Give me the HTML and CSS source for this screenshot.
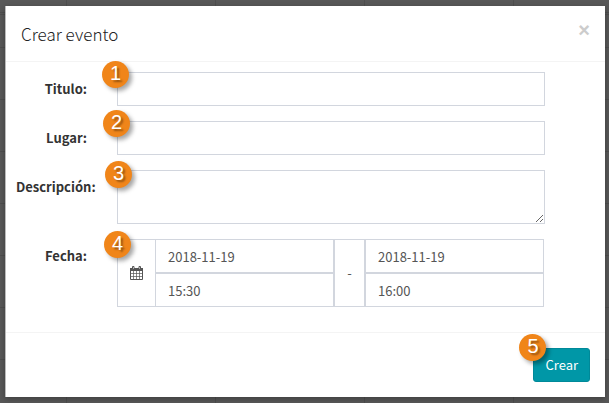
FILE: index.html
```html
<!DOCTYPE html>
<html lang="es">
<head>
    <meta charset="UTF-8">
    <meta name="viewport" content="width=device-width, initial-scale=1.0">
    <title>Crear evento</title>
    <link rel="stylesheet" href="styles.css">
</head>
<body>
    <form class="modal">
        <div class="modal-header">
            <h4 class="modal-title">Crear evento</h4>
            <button type="button" class="close" aria-label="Cerrar">&times;</button>
        </div>

        <div class="modal-body">
            <div class="form-group">
                <label for="titulo">Titulo:</label>
                <div class="field">
                    <input type="text" id="titulo" class="form-control">
                    <span class="step step-1">1</span>
                </div>
            </div>
            <div class="form-group">
                <label for="lugar">Lugar:</label>
                <div class="field">
                    <input type="text" id="lugar" class="form-control">
                    <span class="step step-2">2</span>
                </div>
            </div>
            <div class="form-group">
                <label for="descripcion">Descripción:</label>
                <div class="field">
                    <textarea id="descripcion" class="form-control"></textarea>
                    <span class="step step-3">3</span>
                </div>
            </div>
            <div class="form-group">
                <label for="fecha">Fecha:</label>
                <div class="field">
                    <div class="date-range">
                        <span class="addon">
                            <svg class="calendar" width="13" height="14" viewBox="0 0 13 14" fill="none" stroke="currentColor">
                                <path d="M.5 3.5v10h12v-10"/>
                                <path d="M3.5 5v8M6.5 5v8M9.5 5v8M1 7.5h11M1 10.5h11" stroke-opacity=".7"/>
                                <path d="M0 2h13v3H0z" fill="currentColor" stroke="none"/>
                                <path d="M2.5 3.5v-3h1.5v3zM9 3.5v-3h1.5v3z" fill="#fff"/>
                            </svg>
                        </span>
                        <div class="date-time">
                            <input type="text" id="fecha" class="form-control" value="2018-11-19">
                            <input type="text" class="form-control" value="15:30" aria-label="Hora de inicio">
                        </div>
                        <span class="addon separator">-</span>
                        <div class="date-time">
                            <input type="text" class="form-control" value="2018-11-19" aria-label="Fecha de fin">
                            <input type="text" class="form-control" value="16:00" aria-label="Hora de fin">
                        </div>
                    </div>
                    <span class="step step-4">4</span>
                </div>
            </div>
        </div>

        <div class="modal-footer">
            <div class="action">
                <button type="submit" class="btn">Crear</button>
                <span class="step step-5">5</span>
            </div>
        </div>
    </form>
</body>
</html>
```
FILE: styles.css
```css
* {
    box-sizing: border-box;
}

body {
    margin: 0;
    padding: 6px 4px 6px 5px;
    font-family: "Noto Sans CJK JP", "Open Sans", sans-serif;
    font-size: 13px;
    line-height: 20px;
    color: #333;
    /* calendar grid behind the dialog */
    background-color: #585858;
    background-image:
        linear-gradient(#4e4e4e, #4e4e4e),
        linear-gradient(#4e4e4e, #4e4e4e),
        linear-gradient(#4e4e4e 1px, transparent 1px),
        linear-gradient(90deg, #4e4e4e 1px, transparent 1px);
    background-size: 100% 1px, 100% 1px, 100% 52px, 149px 100%;
    background-position: 0 12px, 0 14px, 0 47px, 66px 0;
    background-repeat: no-repeat, no-repeat, repeat-y, repeat-x;
}

.modal {
    background: #fff;
    border-left: 1px solid #bbb;
    box-shadow: 0 2px 6px rgba(0, 0, 0, 0.3);
}

.modal-header {
    display: flex;
    justify-content: space-between;
    align-items: flex-start;
    padding: 15px;
    border-bottom: 1px solid #f4f4f4;
}

.modal-title {
    margin: 0;
    font-size: 17px;
    font-weight: 300;
    line-height: 25px;
    color: #222;
}

.close {
    padding: 0;
    border: 0;
    background: none;
    font-family: "Liberation Sans", sans-serif;
    font-size: 20px;
    font-weight: bold;
    line-height: 18px;
    color: #ccc;
    cursor: pointer;
}

.modal-body {
    display: grid;
    gap: 15px;
    padding: 10px 60px 25px 10px;
}

.form-group {
    display: grid;
    grid-template-columns: 71px 1fr;
    column-gap: 30px;
}

label {
    padding-top: 7px;
    font-weight: bold;
    text-align: right;
    white-space: nowrap;
}

.field,
.action {
    position: relative;
}

.form-control {
    display: block;
    width: 100%;
    height: 34px;
    padding: 6px 12px;
    border: 1px solid #d2d6de;
    border-radius: 0;
    background: #fff;
    font: inherit;
    color: #555;
}

textarea.form-control {
    height: 54px;
}

.date-range {
    display: flex;
    margin-right: 1px;
}

.addon {
    display: flex;
    align-items: center;
    justify-content: center;
    width: 38px;
    border: 1px solid #d2d6de;
    border-right: 0;
    color: #555;
}

.separator {
    width: 31px;
    border-right: 1px solid #d2d6de;
}

.date-time {
    flex: 1;
}

.modal-footer {
    display: flex;
    justify-content: flex-end;
    padding: 15px;
    border-top: 1px solid #f4f4f4;
}

.btn {
    display: block;
    padding: 6px 11px;
    border: 1px solid #008999;
    border-radius: 3px;
    background: #0097a7;
    font: inherit;
    color: #fff;
    cursor: pointer;
}

/* numbered callouts over the fields */
.step {
    position: absolute;
    width: 27px;
    height: 27px;
    border-radius: 50%;
    background: #f08519;
    box-shadow: 3px 3px 4px rgba(0, 0, 0, 0.35);
    font-family: "Liberation Sans", sans-serif;
    font-size: 20px;
    line-height: 25px;
    text-align: center;
    text-shadow: 2px 2px 2px rgba(0, 0, 0, 0.4);
    color: #fff;
}

.step-1 {
    top: -11px;
    left: -15px;
}

.step-2 {
    top: -11px;
    left: -14px;
}

.step-3 {
    top: -9px;
    left: -12px;
}

.step-4 {
    top: -8px;
    left: -13px;
}

.step-5 {
    top: -14px;
    left: -14px;
}
```
